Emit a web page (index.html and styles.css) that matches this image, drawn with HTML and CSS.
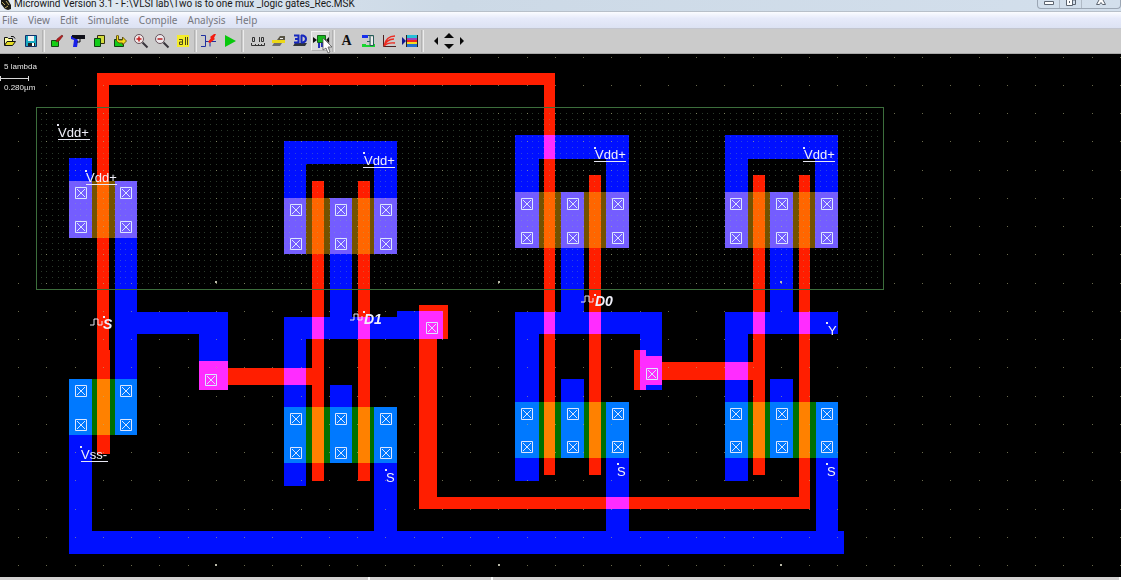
FILE: index.html
```html
<!DOCTYPE html>
<html lang="en">
<head>
<meta charset="utf-8">
<title>Microwind</title>
<link rel="stylesheet" href="styles.css">
</head>
<body>
<header class="titlebar">
  <svg class="app-icon" width="12" height="12" viewBox="0 0 12 12"><path d="M1 0h7l3 5v4l-3 1-3-1-4-5z" fill="#1b1b16"/><path d="M2 2l3 3M6 1l3 4M5 8l3-2" stroke="#b9a860" stroke-width="1"/></svg>
  <span class="title">Microwind Version 3.1 - F:\VLSI lab\Two is to one mux _logic gates_Rec.MSK</span>
  <div class="window-buttons">
    <button class="wbtn" aria-label="Minimize"><svg width="12" height="8" viewBox="0 0 12 8"><path d="M1.500 1.500h9v3h-9z" fill="#fff" stroke="#5c6470"/></svg></button>
    <button class="wbtn" aria-label="Restore"><svg width="12" height="8" viewBox="0 0 12 8"><path d="M4 0h6.500v4.500H8" fill="none" stroke="#5c6470"/><path d="M1.500 0v5.500h6V0M4.500 1v2" fill="#fff" stroke="#5c6470"/></svg></button>
    <button class="wbtn wide" aria-label="Close"><svg width="12" height="8" viewBox="0 0 12 8"><path d="M4 0L1.500 4.500h3L6 2.500l1.500 2h3L8 0" fill="#fff" stroke="#5c6470"/></svg></button>
  </div>
</header>
<nav class="menubar">
  <button>File</button><button>View</button><button>Edit</button><button>Simulate</button><button>Compile</button><button>Analysis</button><button>Help</button>
</nav>
<div class="toolbar" role="toolbar" aria-label="Tools">
  <div class="group">
    <button aria-label="Open"><svg viewBox="0 0 16 16"><path d="M2.500 12V4.500h3l1 1h4V8" fill="#ffffa0" stroke="#111"/><path d="M2.500 12.500L5 8.500h8.500l-3 4z" fill="#e5dc20" stroke="#111"/><path d="M9 3.500q3-1 4 2" fill="none" stroke="#111"/></svg></button>
    <button aria-label="Save"><svg viewBox="0 0 16 16"><path d="M2.500 2.500h11v11h-11z" fill="#18a8c0" stroke="#10306a"/><path d="M5 3h6v5H5z" fill="#f2f2f2"/><path d="M5 10h7v3H5z" fill="#222"/><path d="M9 10h2v3H9z" fill="#fff"/></svg></button>
  </div>
  <span class="sep"></span>
  <div class="group">
    <button aria-label="Draw box"><svg viewBox="0 0 16 16"><path d="M2.500 7.500h7v6h-7z" fill="#14d014" stroke="#124812"/><path d="M7 9l1-3 5-4 1 1-4 5z" fill="#b81c1c" stroke="#6c2020" stroke-width=".6"/></svg></button>
    <button aria-label="Delete"><svg viewBox="0 0 16 16"><path d="M1 3h5l2 5-1 6H3l1-7-3-1z" fill="#1820e8"/><path d="M2 2h13v4H6L2 4z" fill="#101018"/><path d="M7 9h3V6" fill="none" stroke="#111"/></svg></button>
    <button aria-label="Copy"><svg viewBox="0 0 16 16"><path d="M6.500 2.500h7v8h-7z" fill="#d4dc3c" stroke="#333010"/><path d="M3.500 5.500h6v8h-6z" fill="#12cc18" stroke="#104010"/></svg></button>
    <button aria-label="Move"><svg viewBox="0 0 16 16"><path d="M2.500 6.500h9v7h-9z" fill="#12cc18" stroke="#104010"/><path d="M4.500 8V3q1-2 2 0v4h4V4l4 4-4 4v-2H7z" fill="#f2dc18" stroke="#645510"/></svg></button>
    <button aria-label="Zoom in"><svg viewBox="0 0 16 16"><circle cx="6" cy="6" r="4.500" fill="#f3e8e8" stroke="#66525a"/><path d="M9.500 9.500l5 5" stroke="#38343c" stroke-width="2"/><path d="M3.500 6h5M6 3.500v5" stroke="#c42020" stroke-width="1.500"/></svg></button>
    <button aria-label="Zoom out"><svg viewBox="0 0 16 16"><circle cx="6" cy="6" r="4.500" fill="#ece8ec" stroke="#66525a"/><path d="M9.500 9.500l5 5" stroke="#38343c" stroke-width="2"/><path d="M3.500 6h5" stroke="#b42020" stroke-width="1.500"/></svg></button>
    <button aria-label="View all"><svg viewBox="0 0 16 16"><path d="M2 2h12v12H2z" fill="#f4ec2c"/><path d="M4 6.500h3.500v5h-3V9H7M10.500 4v8M12.500 4v8" fill="none" stroke="#4a4618"/></svg></button>
  </div>
  <span class="sep"></span>
  <div class="group">
    <button aria-label="Design rule check"><svg viewBox="0 0 16 16"><path d="M0 2.500h4.500v11H0M5 8.500h4v5M9 8.500h6" fill="none" stroke="#2030a0"/><path d="M7 9l3-4-1-1 4-3h2l-2 4 1 1-5 4z" fill="#f41c10"/></svg></button>
    <button aria-label="Run simulation"><svg viewBox="0 0 16 16"><path d="M3 2l11 6-11 6z" fill="#08c80c"/></svg></button>
  </div>
  <span class="sep"></span>
  <div class="group measure">
    <button aria-label="Measure distance"><svg viewBox="0 0 16 16"><path d="M2.500 4.500h2v4h-2zM9.500 4v5M11.500 4.500h2v4h-2zM1.500 10v2.500h13V10M5.500 11v1M8.500 11v1M11.500 11v1" fill="none" stroke="#333"/></svg></button>
    <button aria-label="2D cross section"><svg viewBox="0 0 16 16"><path d="M1 7h13v3H1z" fill="#ecd818"/><path d="M3 10h8l-2 3H1z" fill="#6d6d70"/><path d="M6 7l3-4h5v4z" fill="#585444"/><path d="M9 5.500h3" stroke="#eee"/></svg></button>
    <button aria-label="3D process view"><svg viewBox="0 0 16 16"><path d="M1 13l2-3h12l-2 3z" fill="#303438"/><path d="M2 2.500h4.500v7H2M3 6h4M9.500 2v8M9 2.500h2q3 1 3 3.500t-3 3.500H9" fill="none" stroke="#1728bd" stroke-width="2"/></svg></button>
    <button class="raised" aria-label="Transistor"><svg viewBox="0 0 16 16"><path d="M4.500 2.500h8v7h-8z" fill="#16b81c" stroke="#146018"/><path d="M0 4l4 3-4 3M16 4l-3 3 3 3" fill="#111"/><path d="M6 10v5M9 10v4" stroke="#2430b8" stroke-width="2"/></svg></button>
  </div>
  <span class="sep"></span>
  <div class="group">
    <button class="letter" aria-label="Add text">A</button>
    <button aria-label="Contact generator"><svg viewBox="0 0 16 16"><path d="M2 2h6v3H2z" fill="#1830ec"/><path d="M2 11h4v3H2zM5 12h7v2H5zM11 11h4v3h-4z" fill="#18d430"/><path d="M8 2.500h5.500v10H10V3M7 8.500h3" fill="none" stroke="#265c58"/><path d="M12 4v8" stroke="#eee" stroke-width="2"/></svg></button>
    <button aria-label="MOS characteristics"><svg viewBox="0 0 16 16"><path d="M2.500 2v11.500H15" fill="none" stroke="#4b2222"/><path d="M3 13Q5 3 14 3M3 13Q6 6 13 6M3 13Q7 9 14 10" fill="none" stroke="#ec2a20" stroke-width="1.300"/></svg></button>
    <button aria-label="Layer palette"><svg viewBox="0 0 16 16"><path d="M0 4l4 4-4 4z" fill="#101890"/><path d="M5 2h10v3H5z" fill="#27bed8"/><path d="M5 5h10v2H5z" fill="#a040b8"/><path d="M5 7h10v2H5z" fill="#f02420"/><path d="M5 9h10v2H5z" fill="#f4dc20"/><path d="M5 11h10v3H5z" fill="#2470d0"/><path d="M4.500 2v12M15.500 2v12" stroke="#222"/></svg></button>
  </div>
  <span class="sep"></span>
  <div class="arrows">
    <button aria-label="Scroll left"><svg class="side" viewBox="0 0 6 10"><path d="M5 1v8L1 5z" fill="#080808"/></svg></button>
    <div class="updown">
      <button aria-label="Scroll up"><svg viewBox="0 0 10 6"><path d="M5 0l5 5H0z" fill="#080808"/></svg></button>
      <button aria-label="Scroll down"><svg viewBox="0 0 10 6"><path d="M0 1h10L5 6z" fill="#080808"/></svg></button>
    </div>
    <button aria-label="Scroll right"><svg class="side" viewBox="0 0 6 10"><path d="M1 1v8l4-4z" fill="#080808"/></svg></button>
  </div>
  <svg class="pointer" viewBox="0 0 11 17"><path d="M1 1v12l3-2 2 5 2-1-2-5h4z" fill="#fff" stroke="#555" stroke-width=".8"/></svg>
</div>
<main class="workspace">
<svg class="layout" viewBox="0 54 1121 523" preserveAspectRatio="xMinYMin slice">
  <defs>
    <g id="via"><path d="M-5.500-5.500h11v11h-11zM-4-4l8 8M4-4l-8 8"/></g>
    <g id="clock"><path d="M0 0h4v-6h4v6h4v-4"/></g>
  </defs>
  <rect x="0" y="54" width="1121" height="523" fill="#000"/>
  <g class="metal">
    <path d="M69 158h23v80h-23zM115 181h22v131h91v78h-29v-56h-62v101h-22zM69 379h23v152h282V407h23v124h209V402h23v129h187V402h22v129h6v23H69z"/>
    <path d="M284 141h113v113h-23v-90h-68v90h-22zM330 198h22v119h45v-6h46v28H306v147h-22V317h46zM330 385h22v78h-22z"/>
    <path d="M515 135h114v113h-23v-89h-67v89h-24zM561 192h23v120h78v78h-22v-56H539v147h-24V312h46zM561 379h23v79h-23z"/>
    <path d="M725 135h113v113h-23v-89h-67v89h-23zM770 192h23v120h45v22h-90v147h-23V312h45zM770 379h23v79h-23z"/>
  </g>
  <g class="poly">
    <path d="M97 73h458v402h-11V85H109v265h1v104H97z"/>
    <path d="M199 361h29v7h84V181h12v300h-12v-96h-84v5h-29zM358 181h12v300h-12z"/>
    <path d="M419 305h29v34h-11v158h362V175h11v334H419z"/>
    <path d="M589 175h12v300h-12zM634 350h12v6h16v6h91V175h12v300h-12v-95h-91v5h-16v5h-12z"/>
  </g>
  <g class="pdiff"><path d="M69 181h68v57H69zM284 198h113v56H284zM515 192h114v56H515zM725 192h113v56H725z"/></g>
  <g class="ndiff"><path d="M69 379h68v56H69zM284 407h113v56H284zM515 402h114v56H515zM725 402h113v56H725z"/></g>
  <path id="fine-grid" class="fine"/>
  <path id="grid" class="coarse"/>
  <path class="origin" d="M215 282h2M498 282h2M780 282h2M215 565h2M498 565h2M780 565h2"/>
  <rect class="well" x="36.500" y="107.500" width="847" height="182"/>
  <g id="vias" class="vias"></g>
  <g class="labels">
    <text class="supply" x="58" y="137">Vdd+</text><path d="M58 139.500h32"/>
    <text class="supply" x="86" y="182">Vdd+</text><path d="M86 184.500h31"/>
    <text class="supply" x="364" y="165">Vdd+</text><path d="M363 167.500h32"/>
    <text class="supply" x="595" y="159">Vdd+</text><path d="M594 161.500h32"/>
    <text class="supply" x="804" y="159">Vdd+</text><path d="M803 161.500h32"/>
    <text class="supply" x="81" y="459">Vss-</text><path d="M81 461.500h27"/>
    <text class="net" x="386" y="482">S</text>
    <text class="net" x="617" y="476">S</text>
    <text class="net" x="827" y="476">S</text>
    <text class="net" x="828" y="335">Y</text>
    <text class="input" x="103" y="329">S</text><use href="#clock" x="90" y="325"/>
    <text class="input" x="364" y="324">D1</text><use href="#clock" x="350" y="320"/>
    <text class="input" x="595" y="306">D0</text><use href="#clock" x="581" y="302"/>
    <path class="pins" d="M57 125h2M85 171h2M363 153h2M594 148h2M803 148h2M80 447h2M385 470h2M617 464h2M826 464h2M826 323h2M103 317h2M363 312h2M594 295h2"/>
  </g>
  <g class="scale">
    <text x="4" y="69">5 lambda</text>
    <path d="M0 78.500h29M.500 76v5M28.500 76v5"/>
    <text x="4" y="90">0.280µm</text>
  </g>
</svg>
</main>
<footer class="statusbar"><span class="pane first"></span><span class="pane second"></span><span class="pane"></span></footer>
<script src="layout.js"></script>
</body>
</html>
```

FILE: styles.css
```css
* { box-sizing: border-box; }
body {
  margin: 0;
  height: 100vh;
  display: flex;
  flex-direction: column;
  overflow: hidden;
  background: #000;
  font-family: "Noto Sans", "Open Sans", sans-serif;
}
button {
  border: 0;
  padding: 0;
  margin: 0;
  background: none;
  font: inherit;
  color: inherit;
}
svg { display: block; }

.titlebar {
  flex: none;
  height: 12px;
  display: flex;
  background: linear-gradient(90deg, #e4ecf4, #ccd9e6 40%, #d3dfec);
  border-bottom: 1px solid #b8c0ca;
}
.app-icon { flex: none; }
.title {
  flex: 1;
  padding-left: 2px;
  font-family: Roboto, "Noto Sans", sans-serif;
  font-size: 10px;
  line-height: 7px;
  white-space: nowrap;
  color: #181818;
}
.window-buttons {
  display: flex;
  height: 9px;
  border: 1px solid #9ba6b4;
  border-top: 0;
  border-radius: 0 0 4px 4px;
}
.wbtn { width: 22px; display: flex; justify-content: center; border-right: 1px solid #b0bac6; }
.wbtn.wide { width: 38px; border: 0; }

.menubar {
  flex: none;
  height: 17px;
  display: flex;
  gap: 10px;
  padding-left: 2px;
  background: linear-gradient(#fbfcff, #e6eafa 40%, #dce2f3);
  border-bottom: 1px solid #c3c6d0;
  font-size: 10px;
  line-height: 15px;
  color: #76787e;
}

.toolbar {
  flex: none;
  position: relative;
  height: 25px;
  display: flex;
  align-items: center;
  gap: 2px;
  background: #cbcbcb;
  border-bottom: 1px solid #a9a9a9;
}
.group { display: flex; gap: 2px; }
.group.measure { padding-left: 2px; }
.group button { width: 19px; height: 20px; display: flex; flex: none; align-items: center; justify-content: center; }
.group svg { width: 16px; height: 16px; flex: none; }
.group .raised { background: #dcdcdc; border: 1px solid; border-color: #f2f2f2 #b0b0b0 #b0b0b0 #f2f2f2; }
.group .letter { font: bold 14px "Liberation Serif", serif; color: #101010; }
.sep { width: 3px; height: 22px; border-left: 1px solid #b2b2b2; border-right: 1px solid #ececec; }
.arrows { display: flex; align-items: center; padding-left: 3px; }
.arrows button { width: 13px; display: flex; justify-content: center; }
.arrows svg { width: 10px; height: 6px; }
.arrows .side { width: 6px; height: 10px; }
.updown { display: flex; flex-direction: column; gap: 4px; }
.pointer { position: absolute; left: 322px; top: 8px; width: 11px; height: 17px; }

.workspace { flex: 1; min-height: 0; }
.layout { width: 100%; height: 100%; isolation: isolate; shape-rendering: crispEdges; }
.metal { fill: #0010ff; }
.poly, .pdiff, .ndiff { mix-blend-mode: screen; }
.poly { fill: #ff1e00; }
.pdiff { fill: #745200; }
.ndiff { fill: #007000; }
.fine { stroke: #90c090; stroke-opacity: .3; }
.coarse { stroke: #b0b080; stroke-opacity: .6; }
.origin { stroke: #b8b8a8; stroke-width: 2; }
.well { fill: none; stroke: #3c6e3c; }
.vias { fill: none; stroke: #dce6ff; shape-rendering: auto; }
.labels { fill: none; stroke: #e8e8f4; shape-rendering: auto; }
.labels text { fill: #f0f0fa; stroke: none; font-family: "Liberation Sans", sans-serif; font-size: 13px; }
.labels .input { font-size: 14px; font-weight: bold; font-style: italic; }
.labels .pins { stroke-width: 2; }
.scale { stroke: #d8d8d8; fill: none; }
.scale text { stroke: none; fill: #e4e4e4; font: 8px "Liberation Sans", sans-serif; }

.statusbar { flex: none; height: 3px; display: flex; background: #d4d2d2; }
.pane { flex: 1; border-right: 2px solid #fff; }
.pane.first { flex: 0 0 33%; }
.pane.second { flex: 0 0 11%; }
```

FILE: layout.js
```js
function dots(x0, x1, y0, y1, pitch) {
  let d = "";
  for (let j = 0; 57 + j * pitch < y1; j++) {
    const y = Math.floor(57 + j * pitch);
    if (y < y0) continue;
    for (let i = -3; 18.5 + i * pitch < x1; i++) {
      const x = Math.floor(18.5 + i * pitch);
      if (x > x0) d += `M${x} ${y}.5h1`;
    }
  }
  return d;
}
document.getElementById("fine-grid").setAttribute("d", dots(37, 882, 109, 288, 5.65));
document.getElementById("grid").setAttribute("d", dots(0, 1121, 55, 576, 28.25));

const cells = [
  { xs: [81, 126], ys: [193, 227, 391, 425] },
  { xs: [296, 341, 386], ys: [210, 244, 419, 453] },
  { xs: [527, 573, 618], ys: [204, 238, 414, 447] },
  { xs: [736, 782, 827], ys: [204, 238, 414, 447] },
  { xs: [211], ys: [380] },
  { xs: [432], ys: [328] },
  { xs: [652], ys: [374] }
];
document.getElementById("vias").innerHTML = cells
  .flatMap(c => c.xs.flatMap(x => c.ys.map(y => `<use href="#via" x="${x}" y="${y}"/>`)))
  .join("");
```
